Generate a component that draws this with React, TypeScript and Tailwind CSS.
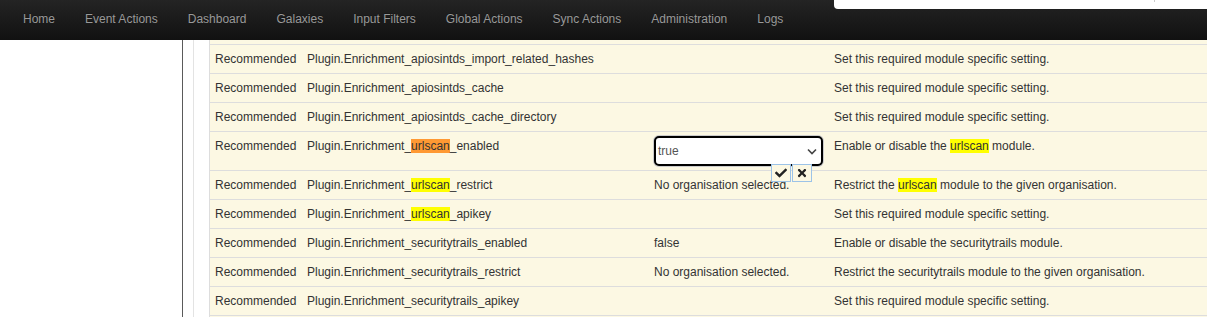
import { FaCheck, FaTimes } from "react-icons/fa";

const navItems = [
  "Home",
  "Event Actions",
  "Dashboard",
  "Galaxies",
  "Input Filters",
  "Global Actions",
  "Sync Actions",
  "Administration",
  "Logs",
];

type Row = {
  prefix: string;
  hit?: "orange" | "yellow";
  suffix?: string;
  value?: string;
  select?: boolean;
  desc: string;
  descHit?: boolean;
  descTail?: string;
};

const SET = "Set this required module specific setting.";

const rows: Row[] = [
  { prefix: "Plugin.Enrichment_apiosintds_import_related_hashes", desc: SET },
  { prefix: "Plugin.Enrichment_apiosintds_cache", desc: SET },
  { prefix: "Plugin.Enrichment_apiosintds_cache_directory", desc: SET },
  {
    prefix: "Plugin.Enrichment_",
    hit: "orange",
    suffix: "_enabled",
    select: true,
    desc: "Enable or disable the ",
    descHit: true,
    descTail: " module.",
  },
  {
    prefix: "Plugin.Enrichment_",
    hit: "yellow",
    suffix: "_restrict",
    value: "No organisation selected.",
    desc: "Restrict the ",
    descHit: true,
    descTail: " module to the given organisation.",
  },
  { prefix: "Plugin.Enrichment_", hit: "yellow", suffix: "_apikey", desc: SET },
  {
    prefix: "Plugin.Enrichment_securitytrails_enabled",
    value: "false",
    desc: "Enable or disable the securitytrails module.",
  },
  {
    prefix: "Plugin.Enrichment_securitytrails_restrict",
    value: "No organisation selected.",
    desc: "Restrict the securitytrails module to the given organisation.",
  },
  { prefix: "Plugin.Enrichment_securitytrails_apikey", desc: SET },
];

function ValueSelect() {
  return (
    <div className="relative h-[30px] w-[169px]">
      <div className="flex h-full items-center justify-between rounded-[5px] border-2 border-black bg-white pl-[2px] pr-[4px] text-[#555] ring-1 ring-[#ccc]">
        <span>true</span>
        <svg width="10" height="7" viewBox="0 0 10 7" aria-hidden="true">
          <path d="M1 1.5L5 5.5L9 1.5" fill="none" stroke="#444" strokeWidth="1.6" />
        </svg>
      </div>
      {/* inline save / cancel */}
      <div className="absolute left-[117px] top-[28px] flex gap-[1px]">
        <span className="flex h-[18px] w-[20px] items-center justify-center border border-[#9cc3e8] bg-[#fcf8e3] text-[#222]">
          <FaCheck size={12} />
        </span>
        <span className="flex h-[18px] w-[20px] items-center justify-center border border-[#9cc3e8] bg-[#fcf8e3] text-[#222]">
          <FaTimes size={12} />
        </span>
      </div>
    </div>
  );
}

function SettingRow({ row }: { row: Row }) {
  return (
    <div className="flex border-t border-[#ddd] bg-[#fcf8e3] leading-[20px] text-[#333]">
      <div className="w-[92px] shrink-0 px-[5px] py-[4px]">Recommended</div>
      <div className="w-[347px] shrink-0 px-[5px] py-[4px] whitespace-nowrap">
        {row.prefix}
        {row.hit && (
          <span className={row.hit === "orange" ? "bg-[#ff9933]" : "bg-[#ffff00]"}>urlscan</span>
        )}
        {row.suffix}
      </div>
      <div className="w-[180px] shrink-0 px-[5px] py-[4px] whitespace-nowrap">
        {row.select ? <ValueSelect /> : row.value}
      </div>
      <div className="flex-1 px-[5px] py-[4px] whitespace-nowrap">
        {row.desc}
        {row.descHit && <span className="bg-[#ffff00]">urlscan</span>}
        {row.descTail}
      </div>
    </div>
  );
}

export default function App() {
  return (
    <div className="relative h-[317px] w-[1207px] overflow-hidden bg-white font-['Liberation_Sans',Arial,sans-serif] text-[12px]">
      <nav className="flex h-10 bg-gradient-to-b from-[#242424] to-[#111] pl-2">
        {navItems.map((item) => (
          <span
            key={item}
            className="px-[15px] leading-[38px] text-[#999] [text-shadow:0_-1px_0_rgba(0,0,0,0.25)]"
          >
            {item}
          </span>
        ))}
      </nav>

      {/* overlay peeking in over the navbar */}
      <div className="absolute left-[834px] right-0 top-0 h-[9px] rounded-bl-[4px] bg-white" />
      <div className="absolute left-[1154px] top-0 h-[2px] w-px bg-[#ccc]" />

      <div className="flex h-[277px]">
        <div className="w-[183px] shrink-0 border-r border-[#5a5a5a]" />
        <div className="w-[11px] shrink-0 border-r border-[#e3e3e3]" />
        <div className="w-[15px] shrink-0" />
        <div className="flex-1 border-l border-[#ddd] bg-[#fcf8e3]">
          <div className="h-[4px]" />
          {rows.map((row, i) => (
            <SettingRow key={i} row={row} />
          ))}
          <div className="h-[29px] border-t border-[#ddd]" />
        </div>
      </div>
    </div>
  );
}
